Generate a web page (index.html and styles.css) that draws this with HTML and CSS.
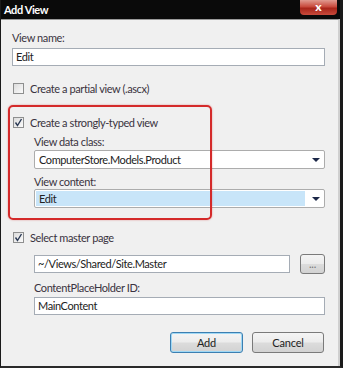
FILE: index.html
```html
<!DOCTYPE html>
<html lang="en">
<head>
    <meta charset="UTF-8">
    <meta name="viewport" content="width=device-width, initial-scale=1.0">
    <title>Add View</title>
    <link rel="stylesheet" href="styles.css">
</head>
<body>
    <div class="window">
        <div class="titlebar">
            <span class="title">Add View</span>
            <span class="close">x</span>
        </div>

        <div class="client">
            <div class="lbl first">View name:</div>
            <div class="textbox">Edit</div>

            <div class="check-row partial">
                <span class="check"></span>
                <span>Create a partial view (.ascx)</span>
            </div>

            <div class="check-row typed">
                <span class="check">
                    <svg width="9" height="9" viewBox="0 0 9 9"><polyline points="1.5,4.5 3.5,7.5 7.5,1" fill="none" stroke="#2b3a55" stroke-width="1.4"/></svg>
                </span>
                <span>Create a strongly-typed view</span>
            </div>

            <div class="indent">
                <div class="lbl gap-small">View data class:</div>
                <div class="combo first-combo">
                    <span class="combo-text">ComputerStore.Models.Product</span>
                    <span class="arrow"></span>
                </div>

                <div class="lbl gap-mid">View content:</div>
                <div class="combo selected">
                    <span class="combo-text">Edit</span>
                    <span class="arrow"></span>
                </div>
            </div>

            <div class="check-row master">
                <span class="check">
                    <svg width="9" height="9" viewBox="0 0 9 9"><polyline points="1.5,4.5 3.5,7.5 7.5,1" fill="none" stroke="#2b3a55" stroke-width="1.4"/></svg>
                </span>
                <span>Select master page</span>
            </div>

            <div class="indent">
                <div class="browse-row">
                    <div class="textbox grow">~/Views/Shared/Site.Master</div>
                    <button class="btn browse">...</button>
                </div>

                <div class="lbl gap-holder">ContentPlaceHolder ID:</div>
                <div class="textbox holder">MainContent</div>
            </div>

            <div class="buttons">
                <button class="btn default">Add</button>
                <button class="btn">Cancel</button>
            </div>

            <!-- red highlight drawn over the strongly-typed group -->
            <div class="highlight"></div>
        </div>
    </div>
</body>
</html>
```

FILE: styles.css
```css
body {
    margin: 0;
    background-color: #fff;
    font-family: Lato, "Open Sans", Arial, sans-serif;
    font-size: 11px;
    letter-spacing: -0.4px;
    color: #333;
}

.window {
    width: 343px;
    box-sizing: border-box;
    background-color: #0a0a0a;
    border-left: 1px solid #1a1a1a;
    border-right: 3px solid #1a1a1a;
    border-bottom: 2px solid #2a2a2a;
}

.titlebar {
    height: 19px;
    display: flex;
    align-items: flex-start;
}

.title {
    color: #fff;
    font-weight: bold;
    font-size: 11px;
    line-height: 19px;
    margin-left: 3px;
}

.close {
    margin-left: auto;
    margin-right: 3px;
    width: 37px;
    height: 15px;
    background: linear-gradient(#e09a90, #c8493c 45%, #a8251a 55%, #c84a3c);
    border-radius: 0 0 4px 4px;
    color: #fff;
    font-weight: 900;
    font-size: 12px;
    line-height: 13px;
    letter-spacing: 0;
    text-align: center;
}

.client {
    position: relative;
    background-color: #f0f0f0;
    border-top: 1px solid #9a9a9a;
    border-right: 2px solid #cfcfcf;
    padding: 0 13px 13px 11px;
}

.lbl {
    line-height: 15px;
    color: #3a3340;
}

.lbl.first {
    padding-top: 10px;
}

.textbox {
    height: 18px;
    box-sizing: border-box;
    border: 1px solid #a5acb5;
    background-color: #fff;
    color: #222;
    line-height: 16px;
    padding-left: 3px;
    margin-top: 3px;
}

.check-row {
    display: flex;
    align-items: center;
    height: 15px;
    padding-left: 1px;
    color: #3a3340;
}

.check-row.partial {
    margin-top: 15px;
}

.check-row.typed {
    margin-top: 19px;
}

.check-row.master {
    margin-top: 22px;
}

.check {
    width: 11px;
    height: 11px;
    box-sizing: border-box;
    border: 1px solid #8e8f8f;
    background: linear-gradient(135deg, #dcdcdc, #fbfbfb);
    margin-right: 6px;
    display: flex;
    align-items: center;
    justify-content: center;
}

.indent {
    padding-left: 22px;
}

.lbl.gap-small {
    margin-top: 4px;
}

.lbl.gap-mid {
    margin-top: 5px;
}

.combo {
    height: 19px;
    box-sizing: border-box;
    border: 1px solid #acacac;
    border-radius: 2px;
    background-color: #fff;
    display: flex;
    align-items: center;
    margin-top: 1px;
    color: #222;
}

.combo.selected {
    margin-top: 0;
}

.combo-text {
    flex: 1;
    line-height: 15px;
    padding-left: 3px;
    margin: 1px;
}

.combo.selected .combo-text {
    background-color: #c8e5f9;
}

.arrow {
    width: 0;
    height: 0;
    border-left: 4px solid transparent;
    border-right: 4px solid transparent;
    border-top: 4px solid #1c2848;
    margin: 0 4px 0 6px;
}

.browse-row {
    display: flex;
    align-items: center;
    gap: 10px;
    margin-top: 9px;
    height: 20px;
}

.browse-row .textbox {
    margin-top: 0;
    flex: 1;
}

.btn {
    font-family: inherit;
    font-size: 11px;
    letter-spacing: -0.2px;
    color: #222;
    height: 21px;
    box-sizing: border-box;
    border: 1px solid #7a7a7a;
    border-radius: 3px;
    background: linear-gradient(#f4f4f4, #ececec 48%, #dcdcdc 52%, #d2d2d2);
    padding: 0;
    margin: 0;
}

.btn.browse {
    width: 25px;
    height: 20px;
    color: #777;
    line-height: 10px;
}

.lbl.gap-holder {
    margin-top: 6px;
}

.textbox.holder {
    margin-top: 2px;
}

.buttons {
    display: flex;
    justify-content: flex-end;
    gap: 9px;
    margin-top: 17px;
    padding-right: 1px;
}

.buttons .btn {
    width: 72px;
}

.btn.default {
    width: 73px;
    border-color: #3c7fb1;
    box-shadow: inset 0 0 0 1px #9fd8f5;
}

.highlight {
    position: absolute;
    left: 7px;
    top: 85px;
    width: 204px;
    height: 115px;
    box-sizing: border-box;
    border: 2px solid #d42a2a;
    border-radius: 5px;
    box-shadow: 0 0 2px rgba(200, 0, 0, 0.4);
}
```
